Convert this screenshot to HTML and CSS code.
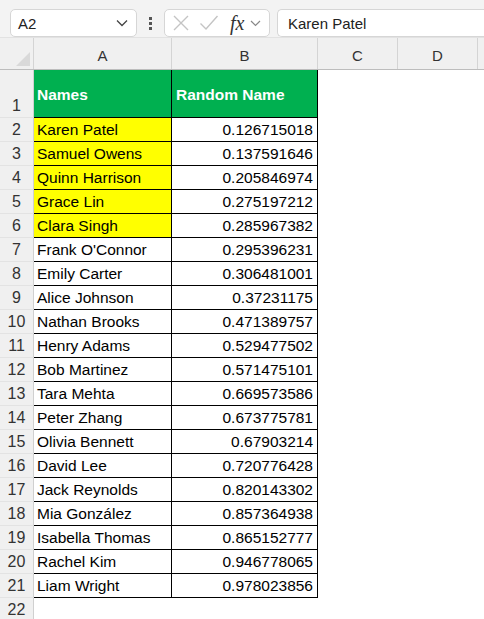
FILE: index.html
```html
<!DOCTYPE html>
<html lang="en">
<head>
  <meta charset="UTF-8">
  <title>Random Names</title>
  <link rel="stylesheet" href="styles.css">
</head>
<body>

  <!-- Formula bar -->
  <div class="toolbar">
    <div class="name-box">
      <span>A2</span>
      <svg class="chev" width="12" height="8" viewBox="0 0 12 8"><path d="M1 1.5 L6 6.5 L11 1.5" fill="none" stroke="#444" stroke-width="1.3"/></svg>
    </div>
    <div class="grip">
      <span></span><span></span><span></span>
    </div>
    <div class="fx-box">
      <svg width="18" height="18" viewBox="0 0 18 18"><path d="M2 2 L16 16 M16 2 L2 16" stroke="#c4c4c4" stroke-width="1.4" fill="none"/></svg>
      <svg width="20" height="18" viewBox="0 0 20 18"><path d="M1.5 9.5 L7 15 L18.5 2" stroke="#c4c4c4" stroke-width="1.4" fill="none"/></svg>
      <span class="fx">fx</span>
      <svg class="chev" width="11" height="7" viewBox="0 0 11 7"><path d="M1 1 L5.5 5.5 L10 1" fill="none" stroke="#888" stroke-width="1.2"/></svg>
    </div>
    <div class="formula">Karen Patel</div>
  </div>

  <!-- Column headers -->
  <div class="col-heads">
    <div class="corner"><div class="tri"></div></div>
    <div class="ch col-a">A</div>
    <div class="ch col-b">B</div>
    <div class="ch col-c">C</div>
    <div class="ch col-d">D</div>
    <div class="ch col-e"></div>
  </div>

  <!-- Sheet -->
  <div class="sheet" id="sheet">
    <div class="row head">
      <div class="rh">1</div>
      <div class="cell col-a">Names</div>
      <div class="cell col-b left">Random Name</div>
    </div>
  </div>

  <script>
    var data = [
      ["Karen Patel", "0.126715018", true],
      ["Samuel Owens", "0.137591646", true],
      ["Quinn Harrison", "0.205846974", true],
      ["Grace Lin", "0.275197212", true],
      ["Clara Singh", "0.285967382", true],
      ["Frank O'Connor", "0.295396231"],
      ["Emily Carter", "0.306481001"],
      ["Alice Johnson", "0.37231175"],
      ["Nathan Brooks", "0.471389757"],
      ["Henry Adams", "0.529477502"],
      ["Bob Martinez", "0.571475101"],
      ["Tara Mehta", "0.669573586"],
      ["Peter Zhang", "0.673775781"],
      ["Olivia Bennett", "0.67903214"],
      ["David Lee", "0.720776428"],
      ["Jack Reynolds", "0.820143302"],
      ["Mia González", "0.857364938"],
      ["Isabella Thomas", "0.865152777"],
      ["Rachel Kim", "0.946778065"],
      ["Liam Wright", "0.978023856"]
    ];

    var sheet = document.getElementById('sheet');
    data.forEach(function (d, i) {
      var row = document.createElement('div');
      row.className = 'row';
      row.innerHTML =
        '<div class="rh">' + (i + 2) + '</div>' +
        '<div class="cell col-a' + (d[2] ? ' hl' : '') + '">' + d[0] + '</div>' +
        '<div class="cell col-b">' + d[1] + '</div>';
      sheet.appendChild(row);
    });

    // empty row 22
    var last = document.createElement('div');
    last.className = 'row empty';
    last.innerHTML = '<div class="rh">22</div>';
    sheet.appendChild(last);
  </script>
</body>
</html>
```

FILE: styles.css
```css
/* General */
* {
  box-sizing: border-box;
}

body {
  margin: 0;
  font-family: "Liberation Sans", Arial, sans-serif;
  font-size: 15.5px;
  color: #000;
  background: #fff;
  overflow: hidden;
}

/* Formula bar */
.toolbar {
  height: 37px;
  background: #f3f3f3;
  display: flex;
  align-items: flex-start;
  padding: 9px 0 0 10px;
  font-size: 15px;
}

.name-box,
.fx-box,
.formula {
  height: 28px;
  background: #fff;
  border: 1px solid #d6d6d6;
  border-radius: 5px;
  display: flex;
  align-items: center;
}

.name-box {
  width: 127px;
  padding: 0 8px 0 7px;
  justify-content: space-between;
  color: #222;
}

.grip {
  width: 27px;
  display: flex;
  flex-direction: column;
  align-items: center;
  gap: 2px;
  padding-top: 8px;
}

.grip span {
  width: 3px;
  height: 3px;
  background: #555;
}

.fx-box {
  width: 106px;
  padding: 0 6px 0 7px;
  gap: 9px;
}

.fx {
  font-family: "Liberation Serif", serif;
  font-style: italic;
  font-size: 20px;
  color: #333;
  margin-left: 2px;
}

.fx-box .chev {
  margin-left: -3px;
}

.formula {
  flex: 1;
  margin-left: 7px;
  border-right: none;
  border-radius: 5px 0 0 5px;
  padding-left: 10px;
  color: #222;
}

/* Column headers */
.col-heads {
  display: flex;
  height: 33px;
  background: #f0f0f0;
  border-bottom: 1px solid #bdbdbd;
  border-top: 1px solid #e2e2e2;
  font-size: 15px;
}

.corner {
  width: 34px;
  border-right: 1px solid #d4d4d4;
  position: relative;
}

.tri {
  position: absolute;
  right: 3px;
  bottom: 3px;
  width: 0;
  height: 0;
  border-left: 14px solid transparent;
  border-bottom: 14px solid #d9d9d9;
}

.ch {
  border-right: 1px solid #d4d4d4;
  display: flex;
  align-items: center;
  justify-content: center;
  color: #333;
  padding-top: 4px;
}

.col-a { width: 138px; }
.col-b { width: 146px; }
.col-c { width: 80px; }
.col-d { width: 80px; }
.col-e { flex: 1; border-right: none; }

/* Sheet */
.row {
  display: flex;
  height: 24px;
}

.row.head {
  height: 48px;
}

.rh {
  width: 34px;
  background: #f0f0f0;
  border-right: 1px solid #d0d0d0;
  border-bottom: 1px solid #e3e3e3;
  color: #333;
  display: flex;
  align-items: flex-end;
  justify-content: center;
  padding-bottom: 2px;
  font-size: 16px;
}

.cell {
  border-right: 1px solid #000;
  border-bottom: 1px solid #000;
  display: flex;
  align-items: flex-end;
  justify-content: flex-end;
  padding: 0 4px 2px 3px;
  white-space: nowrap;
}

.cell.col-a,
.cell.left {
  justify-content: flex-start;
}

.cell.col-b {
  padding-left: 4px;
}

.head .cell {
  background: #00b050;
  color: #fff;
  font-weight: bold;
  align-items: center;
  padding-bottom: 0;
  padding-top: 3px;
}

.cell.hl {
  background: #ffff00;
}
```
